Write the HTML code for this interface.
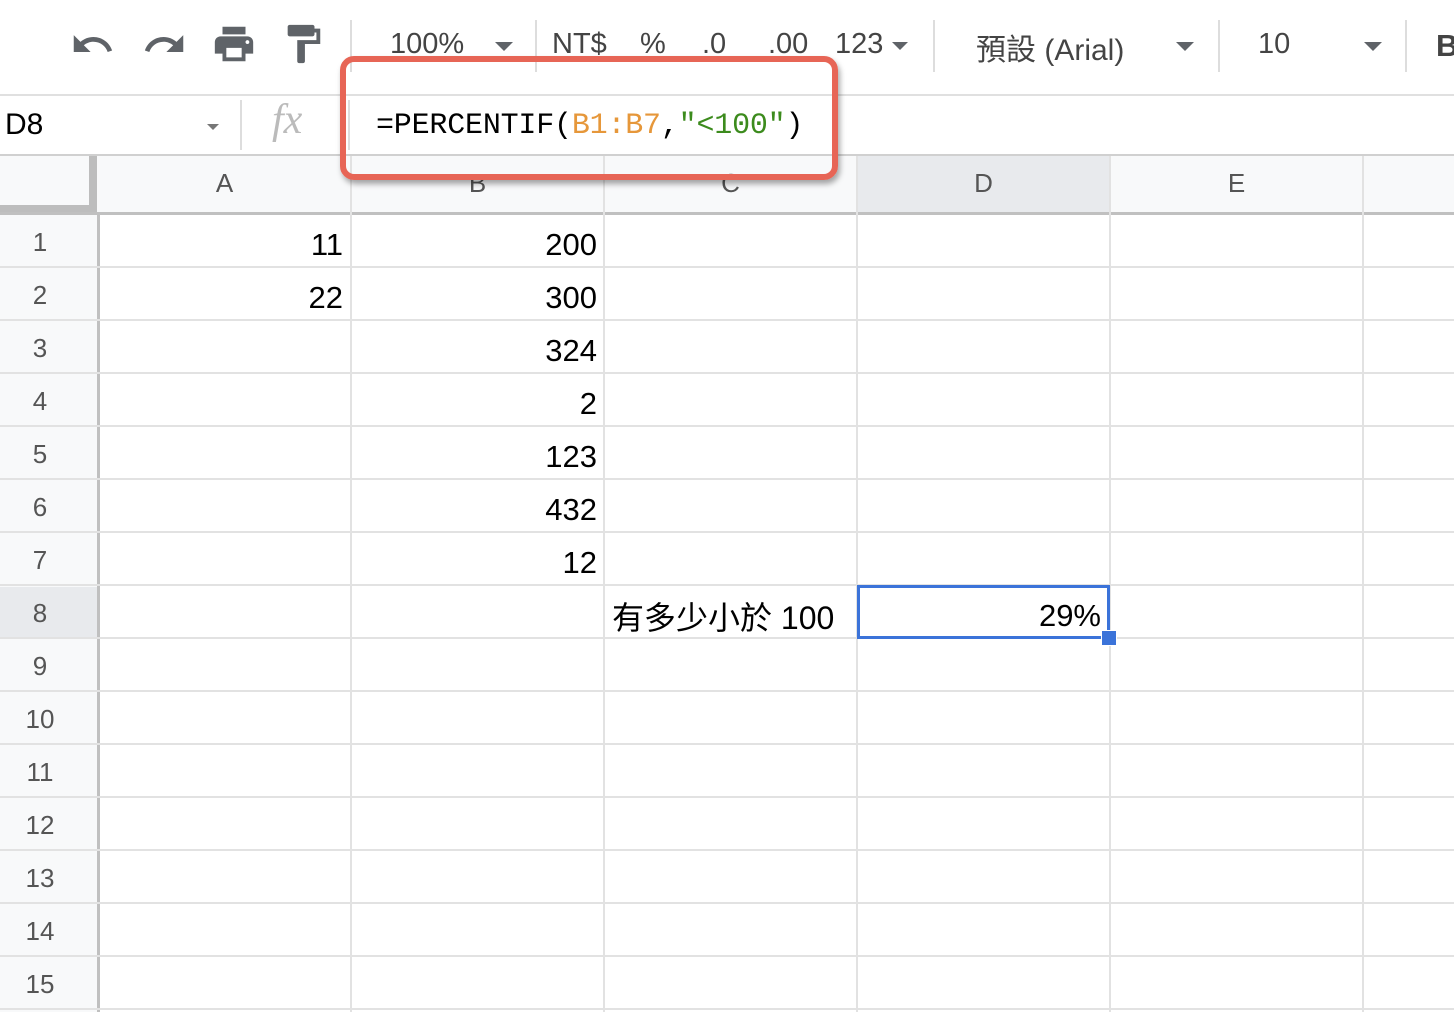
<!DOCTYPE html><html><head><style>
body{margin:0;width:1454px;height:1012px;overflow:hidden;background:#fff;font-family:"Liberation Sans","Noto Sans CJK TC",sans-serif;position:relative}
.a{position:absolute}
.tb{position:absolute;color:#444;font-size:29px;top:28px;white-space:nowrap}
.vl{position:absolute;width:2px;background:#e2e2e2}
.hl{position:absolute;height:2px;background:#e2e2e2}
.num{position:absolute;font-size:31px;color:#000;text-align:right}
.rh{position:absolute;left:0;width:80px;text-align:center;font-size:26px;color:#555}
.ch{position:absolute;top:168px;font-size:26px;color:#555;text-align:center;width:253px}
</style></head><body>
<!-- toolbar icons -->
<svg class="a" style="left:70px;top:22px" width="45" height="45" viewBox="0 0 24 24"><path fill="#5f6368" d="M12.5 8c-2.65 0-5.05.99-6.9 2.6L2 7v9h9l-3.62-3.62c1.39-1.16 3.160-1.88 5.12-1.88 3.54 0 6.55 2.31 7.6 5.5l2.37-.78C21.08 11.03 17.15 8 12.5 8z"/></svg>
<svg class="a" style="left:142px;top:22px" width="45" height="45" viewBox="0 0 24 24"><path fill="#5f6368" d="M18.4 10.6C16.55 8.99 14.15 8 11.5 8c-4.65 0-8.58 3.03-9.96 7.22L3.9 16c1.05-3.19 4.05-5.5 7.6-5.5 1.95 0 3.73.72 5.12 1.88L13 16h9V7l-3.6 3.6z"/></svg>
<svg class="a" style="left:211px;top:21px" width="46" height="46" viewBox="0 0 24 24"><path fill="#5f6368" d="M19 8H5c-1.66 0-3 1.34-3 3v6h4v4h12v-4h4v-6c0-1.66-1.34-3-3-3zm-3 11H8v-5h8v5zm3-7c-.55 0-1-.45-1-1s.45-1 1-1 1 .45 1 1-.45 1-1 1zm1-9H6v4h12V3z"/></svg>
<svg class="a" style="left:280px;top:21px" width="46" height="46" viewBox="0 0 24 24"><path fill="#5f6368" d="M18 4V3c0-.55-.45-1-1-1H5c-.55 0-1 .45-1 1v4c0 .55.45 1 1 1h12c.55 0 1-.45 1-1V6h1v4H9v11c0 .55.45 1 1 1h2c.55 0 1-.45 1-1v-9h8V4h-3z"/></svg>
<div class="a" style="left:350px;top:20px;width:2px;height:52px;background:#ddd"></div>
<div class="tb" style="left:390px">100%</div>
<div class="a" style="left:495px;top:42px;border:9px solid transparent;border-top:9px solid #5f6368;border-bottom:0"></div>
<div class="a" style="left:535px;top:20px;width:2px;height:52px;background:#ddd"></div>
<div class="tb" style="left:552px">NT$</div>
<div class="tb" style="left:640px">%</div>
<div class="tb" style="left:702px">.0</div>
<div class="tb" style="left:768px">.00</div>
<div class="tb" style="left:835px">123</div>
<div class="a" style="left:892px;top:42px;border:8px solid transparent;border-top:8px solid #5f6368;border-bottom:0"></div>
<div class="a" style="left:933px;top:20px;width:2px;height:52px;background:#ddd"></div>
<div class="tb" style="left:976px;top:25px;font-size:30px">預設 (Arial)</div>
<div class="a" style="left:1176px;top:42px;border:9px solid transparent;border-top:9px solid #5f6368;border-bottom:0"></div>
<div class="a" style="left:1218px;top:20px;width:2px;height:52px;background:#ddd"></div>
<div class="tb" style="left:1258px">10</div>
<div class="a" style="left:1364px;top:42px;border:9px solid transparent;border-top:9px solid #5f6368;border-bottom:0"></div>
<div class="a" style="left:1405px;top:20px;width:2px;height:52px;background:#ddd"></div>
<div class="a" style="left:1436px;top:28px;font-size:31px;font-weight:bold;color:#444">B</div>
<div class="a" style="left:0;top:94px;width:1454px;height:2px;background:#e0e0e0"></div>
<!-- formula bar -->
<div class="a" style="left:5px;top:108px;font-size:30px;color:#000">D8</div>
<div class="a" style="left:207px;top:124px;border:6px solid transparent;border-top:6px solid #777;border-bottom:0"></div>
<div class="a" style="left:240px;top:100px;width:2px;height:50px;background:#ddd"></div>
<div class="a" style="left:272px;top:96px;font-family:'Liberation Serif',serif;font-style:italic;font-size:42px;color:#bbb">fx</div>
<div class="a" style="left:348px;top:100px;width:2px;height:50px;background:#ddd"></div>
<div class="a" style="left:376px;top:109px;font-family:'Liberation Mono',monospace;font-size:30px;color:#000;letter-spacing:-0.2px">=PERCENTIF(<span style="color:#e6973a">B1:B7</span>,<span style="color:#3c8b1d">"&lt;100"</span>)</div>
<div class="a" style="left:0;top:154px;width:1454px;height:2px;background:#d0d0d0"></div>
<!-- headers -->
<div class="a" style="left:0;top:156px;width:1454px;height:57px;background:#f8f9fa"></div>
<div class="a" style="left:857px;top:156px;width:252px;height:57px;background:#e8eaed"></div>
<div class="a" style="left:0;top:213px;width:97px;height:799px;background:#f8f9fa"></div>
<div class="a" style="left:0;top:587px;width:97px;height:51px;background:#e8eaed"></div>
<div class="a" style="left:0;top:156px;width:97px;height:57px;background:#f8f9fa;box-sizing:border-box;border-right:8px solid #bdbdbd;border-bottom:8px solid #bdbdbd"></div>
<div class="ch" style="left:98px">A</div><div class="ch" style="left:351px">B</div><div class="ch" style="left:604px">C</div><div class="ch" style="left:857px">D</div><div class="ch" style="left:1110px">E</div>
<div class="a" style="left:97px;top:213px;width:3px;height:799px;background:#c0c0c0"></div>
<div class="a" style="left:0;top:212px;width:1454px;height:3px;background:#c0c0c0"></div>
<!-- vertical grid -->
<div class="vl" style="left:350px;top:156px;height:856px"></div>
<div class="vl" style="left:603px;top:156px;height:856px"></div>
<div class="vl" style="left:856px;top:156px;height:856px"></div>
<div class="vl" style="left:1109px;top:156px;height:856px"></div>
<div class="vl" style="left:1362px;top:156px;height:856px"></div>
<!-- rows -->
<div class="hl" style="left:0;top:266px;width:1454px"></div>
<div class="hl" style="left:0;top:319px;width:1454px"></div>
<div class="hl" style="left:0;top:372px;width:1454px"></div>
<div class="hl" style="left:0;top:425px;width:1454px"></div>
<div class="hl" style="left:0;top:478px;width:1454px"></div>
<div class="hl" style="left:0;top:531px;width:1454px"></div>
<div class="hl" style="left:0;top:584px;width:1454px"></div>
<div class="hl" style="left:0;top:637px;width:1454px"></div>
<div class="hl" style="left:0;top:690px;width:1454px"></div>
<div class="hl" style="left:0;top:743px;width:1454px"></div>
<div class="hl" style="left:0;top:796px;width:1454px"></div>
<div class="hl" style="left:0;top:849px;width:1454px"></div>
<div class="hl" style="left:0;top:902px;width:1454px"></div>
<div class="hl" style="left:0;top:955px;width:1454px"></div>
<div class="hl" style="left:0;top:1008px;width:1454px"></div>
<div class="rh" style="top:227px">1</div><div class="rh" style="top:280px">2</div><div class="rh" style="top:333px">3</div><div class="rh" style="top:386px">4</div><div class="rh" style="top:439px">5</div><div class="rh" style="top:492px">6</div><div class="rh" style="top:545px">7</div><div class="rh" style="top:598px">8</div><div class="rh" style="top:651px">9</div><div class="rh" style="top:704px">10</div><div class="rh" style="top:757px">11</div><div class="rh" style="top:810px">12</div><div class="rh" style="top:863px">13</div><div class="rh" style="top:916px">14</div><div class="rh" style="top:969px">15</div>
<!-- data -->
<div class="num" style="left:100px;width:243px;top:227px">11</div>
<div class="num" style="left:100px;width:243px;top:280px">22</div>
<div class="num" style="left:353px;width:244px;top:227px">200</div>
<div class="num" style="left:353px;width:244px;top:280px">300</div>
<div class="num" style="left:353px;width:244px;top:333px">324</div>
<div class="num" style="left:353px;width:244px;top:386px">2</div>
<div class="num" style="left:353px;width:244px;top:439px">123</div>
<div class="num" style="left:353px;width:244px;top:492px">432</div>
<div class="num" style="left:353px;width:244px;top:545px">12</div>
<div class="a" style="left:612px;top:593px;font-size:32px;color:#000;white-space:nowrap">有多少小於 100</div>
<div class="a" style="left:857px;top:585px;width:253px;height:54px;box-sizing:border-box;border:3px solid #3b73d9;background:#fff"></div>
<div class="num" style="left:860px;width:241px;top:598px">29%</div>
<div class="a" style="left:1101px;top:630px;width:14px;height:14px;background:#3b73d9;border:1px solid #fff"></div>
<!-- red box -->
<div class="a" style="left:340px;top:56px;width:486px;height:112px;border:6px solid #e76556;border-radius:14px;box-shadow:2px 4px 6px rgba(0,0,0,.35)"></div>
</body></html>
